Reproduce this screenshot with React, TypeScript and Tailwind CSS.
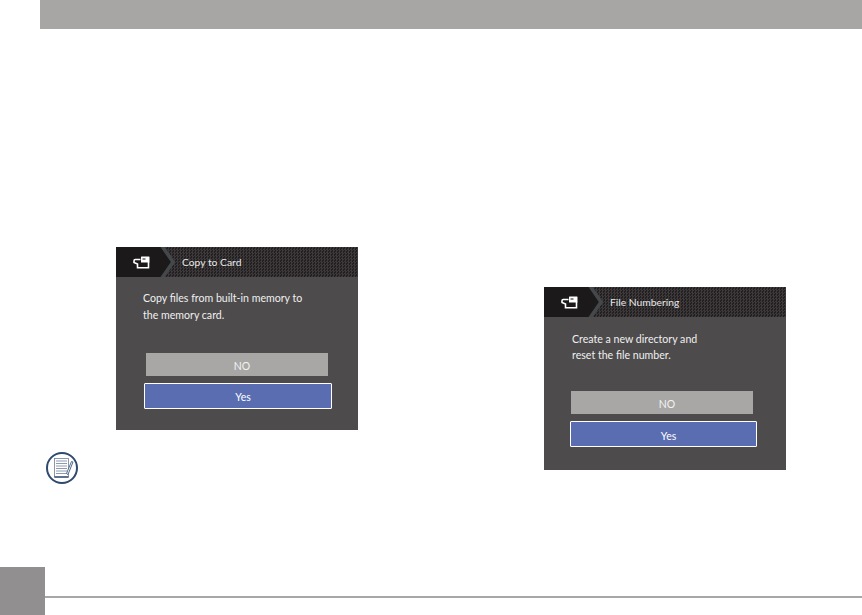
import React from 'react';

function CameraIcon() {
  return (
    <svg width="17" height="13" viewBox="0 0 17 13" fill="none">
      <path d="M7.5 3.5H2.2Q1 3.5 1 4.7V6.5L4.5 8V11.7H15.5V6" stroke="#fff" strokeWidth="1.6" />
      <rect x="8" y="0.5" width="8.5" height="6" rx="0.5" fill="#fff" />
      <rect x="9.5" y="2" width="3" height="2" fill="#8a8a8a" />
    </svg>
  );
}

function NoteIcon() {
  return (
    <svg width="34" height="34" viewBox="0 0 34 34" fill="none">
      <circle cx="17" cy="17" r="15" fill="#fff" stroke="#2f4a6e" strokeWidth="2" />
      <rect x="9.5" y="7.5" width="14" height="18.5" fill="#fff" stroke="#6d7f97" strokeWidth="0.8" />
      <path d="M11 10h11M11 12.5h11M11 15h11M11 17.5h11M11 20h11M11 22.5h11" stroke="#8d9bb0" strokeWidth="1.2" />
      <path d="M9.5 26h14" stroke="#2f4a70" strokeWidth="1.4" />
      <path d="M28 11l-5 12.5 -1.5 -1 5 -12z" fill="#fff" stroke="#52698a" strokeWidth="1" />
    </svg>
  );
}

function CameraScreen({ title, lines, right }: { title: string; lines: string[]; right?: boolean }) {
  return (
    <div className="w-[242px] h-[183px] flex flex-col bg-[#4d4b4c] text-white">
      <div className="h-[30px] flex items-center bg-[repeating-conic-gradient(#3d393a_0_25%,#221f20_0_50%)] bg-[length:3px_3px]">
        <div className="w-[44px] h-full flex items-center justify-center pl-[6px] bg-[#1b1919]">
          <CameraIcon />
        </div>
        <svg width="16" height="30" viewBox="0 0 16 30" className="shrink-0">
          <path d="M0 0h1l11 15L1 30H0z" fill="#1b1919" />
          <path d="M2 -1l11 16L2 31" fill="none" stroke="#45484b" strokeWidth="3.6" />
        </svg>
        <span className="ml-[6px] pt-[2px] text-[10.3px] text-[#e8e8e8]">{title}</span>
      </div>
      <div className={right ? 'pl-[28px] pt-[14px] h-[74px] text-[10.6px] leading-[16px] text-[#f0f0f0]' : 'pl-[27px] pt-[13px] h-[76px] text-[10.6px] leading-[17px] text-[#f0f0f0]'}>
        {lines.map((l) => (
          <div key={l}>{l}</div>
        ))}
      </div>
      <div className="flex flex-col">
        <div className={right ? 'ml-[27px] w-[182px] h-[23px] pt-[5px] pl-[10px] flex items-center justify-center bg-[#a8a7a5] text-[10.5px] text-[#f2f2f2]' : 'ml-[30px] w-[182px] h-[23px] pt-[5px] pl-[10px] flex items-center justify-center bg-[#a8a7a5] text-[10.5px] text-[#f2f2f2]'}>
          NO
        </div>
        <div className={right ? 'ml-[26px] mt-[7px] w-[187px] h-[26px] pt-[5px] pl-[10px] flex items-center justify-center bg-[#5b6db1] border border-white rounded-[1px] text-[10.5px] text-white' : 'ml-[28px] mt-[7px] w-[188px] h-[26px] pt-[4px] pl-[10px] flex items-center justify-center bg-[#5b6db1] border border-white rounded-[1px] text-[10.5px] text-white'}>
          Yes
        </div>
      </div>
    </div>
  );
}

export default function App() {
  return (
    <div className="w-[862px] h-[615px] flex flex-col bg-white font-['Lato',sans-serif] overflow-hidden">
      <div className="ml-[40px] h-[29px] shrink-0 bg-[#a8a5a5]" />
      <div className="flex-1 flex">
        <div className="w-[428px] pt-[218px] pl-[116px]">
          <CameraScreen title="Copy to Card" lines={['Copy files from built-in memory to', 'the memory card.']} />
          <div className="ml-[-71px] mt-[21px]">
            <NoteIcon />
          </div>
        </div>
        <div className="pt-[258px] pl-[116px]">
          <CameraScreen right title="File Numbering" lines={['Create a new directory and', 'reset the file number.']} />
        </div>
      </div>
      <div className="h-[48px] shrink-0 flex">
        <div className="w-[45px] bg-[#918f8f]" />
        <div className="flex-1 pt-[29px]">
          <div className="h-[2px] bg-[#a8a6a6]" />
        </div>
      </div>
    </div>
  );
}
